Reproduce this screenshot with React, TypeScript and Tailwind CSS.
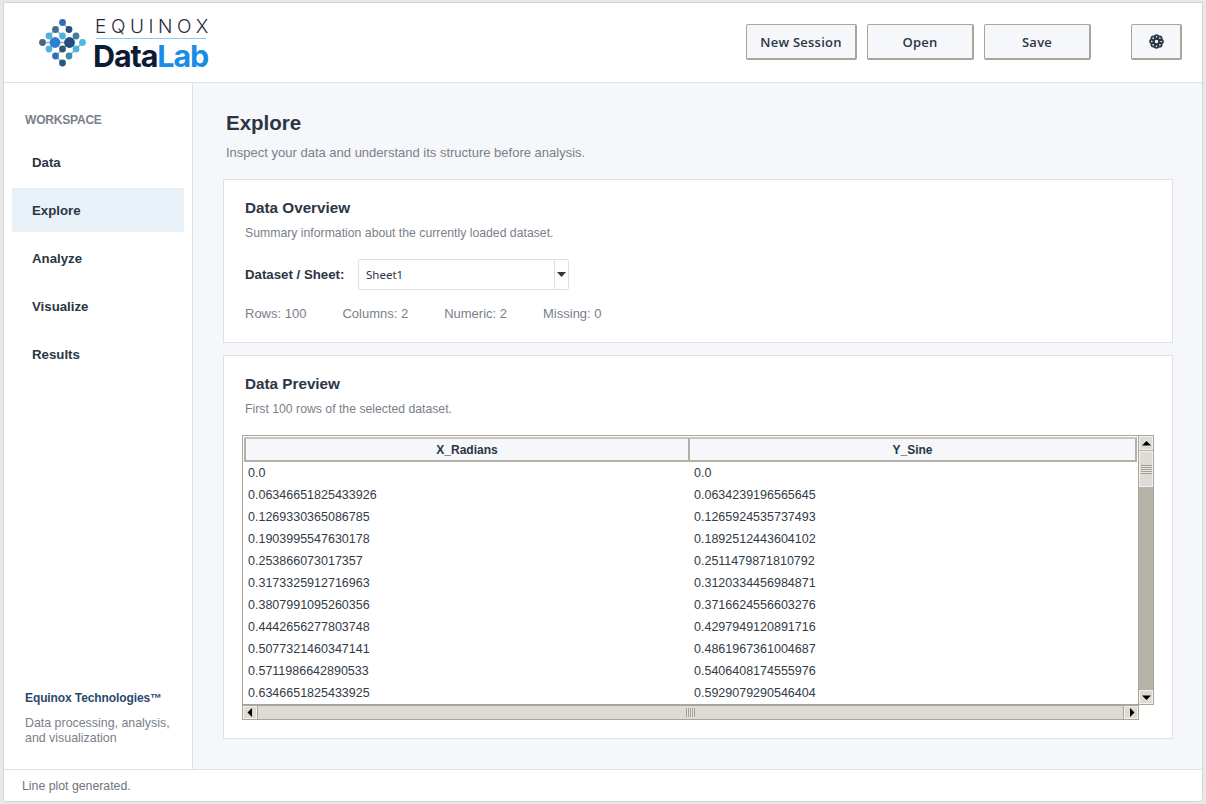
const rows = [
  ["0.0", "0.0"],
  ["0.06346651825433926", "0.0634239196565645"],
  ["0.1269330365086785", "0.1265924535737493"],
  ["0.1903995547630178", "0.1892512443604102"],
  ["0.253866073017357", "0.2511479871810792"],
  ["0.3173325912716963", "0.3120334456984871"],
  ["0.3807991095260356", "0.3716624556603276"],
  ["0.4442656277803748", "0.4297949120891716"],
  ["0.5077321460347141", "0.4861967361004687"],
  ["0.5711986642890533", "0.5406408174555976"],
  ["0.6346651825433925", "0.5929079290546404"],
];

const navItems = ["Data", "Explore", "Analyze", "Visualize", "Results"];

const dots = [
  [24.5, 4.5, 3.4, "#2f6fb5"],
  [17.5, 11.5, 3.4, "#3f6f92"],
  [31, 11.5, 3.4, "#27507f"],
  [11, 18, 3.4, "#4fb2de"],
  [24.5, 18, 3.4, "#4fb2de"],
  [38, 18, 3.4, "#3f7f9f"],
  [4.5, 24.5, 3.4, "#47677f"],
  [17, 24.5, 5.4, "#2f7fd0"],
  [31.5, 24.5, 5.4, "#1f4f80"],
  [44.5, 24.5, 3.4, "#4fb8e0"],
  [11, 31, 3.4, "#4fb2de"],
  [24.5, 31, 3.4, "#33566f"],
  [38, 31, 3.4, "#4fb2de"],
  [17.5, 38, 3.4, "#2f6fb5"],
  [31, 38, 3.4, "#3f8fa8"],
  [24.5, 45, 3.4, "#2c5580"],
] as const;

const Logo = () => (
  <div className="flex items-center">
    <svg width="50" height="50" viewBox="0 0 50 50" className="ml-[34px] blur-[0.4px]">
      <g stroke="#8fb4cc" strokeWidth="1.5">
        <path d="M24.5 4.5L31 11.5M17.5 11.5L11 18M17.5 11.5L24.5 18M38 18L31.5 24.5M4.5 24.5L17 24.5M17 24.5L31.5 24.5M11 31L17 24.5M24.5 31L31.5 24.5M38 31L44.5 24.5M17.5 38L24.5 45M31 38L38 31M17.5 38L24.5 31" />
      </g>
      {dots.map(([cx, cy, r, fill], i) => (
        <circle key={i} cx={cx} cy={cy} r={r} fill={fill} />
      ))}
    </svg>
    <div className="ml-[7px] h-[60px] flex flex-col items-start font-['Inter',sans-serif]">
      <span className="text-[19px] leading-[20px] mt-[4px] tracking-[4.6px] font-light text-[#1f2a3c]">EQUINOX</span>
      <div className="mt-[1px] ml-[1px] w-[110px] h-[1px] bg-[#7fd0f5]" />
      <div className="text-[30.5px] leading-[30px] font-bold tracking-[-1.1px] mt-[2px] ml-[-2px] text-[#0d1b33]">
        Data<span className="text-[#1b8ce6]">Lab</span>
      </div>
    </div>
  </div>
);

const HeaderButton = ({ label, width }: { label: string; width: string }) => (
  <button
    className={`${width} h-[36px] pt-[3px] border border-[#a8a59a] border-b-2 border-r-2 rounded-[2px] bg-[#f5f7fa] text-[13px] font-semibold tracking-[0.25px] text-[#2b3644] font-['Open_Sans',sans-serif] flex items-center justify-center`}
  >
    {label}
  </button>
);

const Triangle = ({ d }: { d: string }) => (
  <svg width="9" height="9" viewBox="0 0 9 9">
    <path d={d} fill="#000" />
  </svg>
);

const ScrollButton = ({ d, className }: { d: string; className: string }) => (
  <div className={`bg-[#dcdbd5] border border-[#f2f1ed] flex items-center justify-center ${className}`}>
    <Triangle d={d} />
  </div>
);

const Card = ({ title, desc, className, children }: { title: string; desc: string; className: string; children: React.ReactNode }) => (
  <section className={`bg-white border border-[#dde1e6] px-[21px] ${className}`}>
    <h2 className="text-[15.25px] leading-[18px] font-bold text-[#2b3644] mt-[19px]">{title}</h2>
    <p className="text-[12.25px] leading-[16px] text-[#7a808a] mt-[8px]">{desc}</p>
    {children}
  </section>
);

export default function App() {
  return (
    <div className="w-[1206px] h-[804px] overflow-hidden bg-[#e8e8e8] pt-[2px] pl-[3px] pr-[3px] pb-[2px] font-['Liberation_Sans',Arial,sans-serif]">
      <div className="h-full flex flex-col bg-white border border-[#d4d6da] rounded-b-[5px] overflow-hidden">
        <header className="h-[80px] shrink-0 flex items-center border-b border-[#dde1e6] bg-white">
          <Logo />
          <div className="ml-auto flex gap-[10px] items-center mt-[-2px]">
            <HeaderButton label="New Session" width="w-[111px]" />
            <HeaderButton label="Open" width="w-[107px]" />
            <HeaderButton label="Save" width="w-[107px]" />
            <button className="ml-[30px] mr-[20px] w-[51px] h-[36px] border border-[#a8a59a] border-b-2 border-r-2 rounded-[2px] bg-[#f5f7fa] flex items-center justify-center">
              <svg width="15" height="15" viewBox="0 0 15 15" fill="none" stroke="#2b3644" strokeWidth="1.8">
                <circle cx="7.5" cy="7.5" r="3" />
                <circle cx="7.5" cy="3" r="1.9" />
                <circle cx="7.5" cy="12" r="1.9" />
                <circle cx="3" cy="7.5" r="1.9" />
                <circle cx="12" cy="7.5" r="1.9" />
                <circle cx="4.3" cy="4.3" r="1.9" />
                <circle cx="10.7" cy="4.3" r="1.9" />
                <circle cx="4.3" cy="10.7" r="1.9" />
                <circle cx="10.7" cy="10.7" r="1.9" />
              </svg>
            </button>
          </div>
        </header>

        <div className="flex-1 flex min-h-0">
          <aside className="w-[189px] shrink-0 border-r border-[#dde1e6] bg-white flex flex-col px-[8px]">
            <div className="text-[12px] leading-[14px] font-bold tracking-[-0.2px] text-[#7a808a] mt-[30px] ml-[13px]">WORKSPACE</div>
            <nav className="flex flex-col gap-[4px] mt-[13px]">
              {navItems.map((item) => (
                <div
                  key={item}
                  className={`h-[44px] pt-[1px] flex items-center pl-[20px] text-[13.25px] font-bold text-[#2b3644] ${item === "Explore" ? "bg-[#e8f0f8]" : ""}`}
                >
                  {item}
                </div>
              ))}
            </nav>
            <div className="mt-auto ml-[13px] mb-[23px]">
              <div className="text-[12px] leading-[14px] font-bold tracking-[-0.1px] text-[#2a4a6e]">Equinox Technologies™</div>
              <div className="text-[12.4px] leading-[15px] text-[#7a808a] mt-[11px]">
                Data processing, analysis,
                <br />
                and visualization
              </div>
            </div>
          </aside>

          <main className="flex-1 min-w-0 bg-[#f5f7fa] pl-[30px] pr-[29px]">
            <h1 className="text-[20.5px] leading-[24px] font-bold text-[#2b3644] mt-[28px] ml-[3px]">Explore</h1>
            <p className="text-[13px] leading-[16px] text-[#7a808a] mt-[10px] ml-[3px]">
              Inspect your data and understand its structure before analysis.
            </p>

            <Card title="Data Overview" desc="Summary information about the currently loaded dataset." className="h-[164px] mt-[18px]">
              <div className="flex items-center mt-[18px]">
                <span className="text-[13.25px] font-bold text-[#2b3644] w-[113px]">Dataset / Sheet:</span>
                <div className="w-[211px] h-[31px] border border-[#dde1e6] rounded-[2px] bg-white flex items-center">
                  <span className="flex-1 pl-[7px] text-[11.5px] text-[#2b3644] font-['Noto_Sans',sans-serif]">Sheet1</span>
                  <div className="w-[14px] h-full border-l border-[#dde1e6] flex items-center justify-center">
                    <svg width="9" height="5" viewBox="0 0 9 5">
                      <path d="M0 0H9L4.5 5Z" fill="#2b3644" />
                    </svg>
                  </div>
                </div>
              </div>
              <div className="flex gap-[36px] mt-[16px] text-[13px] leading-[16px] text-[#7a808a]">
                <span>Rows: 100</span>
                <span>Columns: 2</span>
                <span>Numeric: 2</span>
                <span>Missing: 0</span>
              </div>
            </Card>

            <Card title="Data Preview" desc="First 100 rows of the selected dataset." className="h-[384px] mt-[12px]">
              <div className="flex items-start ml-[-3px] mr-[-4px] mt-[18px]">
                <div className="w-[897px] shrink-0 flex flex-col">
                  <div className="border border-[#a8a59a] h-[270px] flex flex-col bg-white">
                    <div className="flex h-[26px] shrink-0 pt-[1px] pl-[1px] bg-white">
                      <div className="w-[446px] border-2 border-[#b3b0a4] border-t-[#c8c6bc] bg-[#f5f7fa] flex items-center justify-center text-[12px] font-bold text-[#2b3644]">
                        X_Radians
                      </div>
                      <div className="w-[447px] border-2 border-l-0 border-[#b3b0a4] border-t-[#c8c6bc] bg-[#f5f7fa] flex items-center justify-center text-[12px] font-bold text-[#2b3644]">
                        Y_Sine
                      </div>
                    </div>
                    <div className="flex-1 overflow-hidden">
                      {rows.map(([x, y]) => (
                        <div key={x + y} className="h-[22px] flex items-center text-[12.5px] text-[#333b47]">
                          <span className="w-[448px] pl-[5px]">{x}</span>
                          <span className="pl-[3px]">{y}</span>
                        </div>
                      ))}
                    </div>
                  </div>
                  <div className="h-[15px] border-y border-x border-[#a8a59a] flex bg-[#dcdbd5]">
                    <ScrollButton d="M6 0V9L1.5 4.5Z" className="w-[14px]" />
                    <div className="flex-1 border-x border-[#a8a59a] flex items-center justify-center">
                      <div className="w-[9px] h-[9px] bg-[repeating-linear-gradient(90deg,#9f9d92_0,#9f9d92_1px,#e8e7e2_1px,#e8e7e2_2px)]" />
                    </div>
                    <ScrollButton d="M3 0V9L7.5 4.5Z" className="w-[14px]" />
                  </div>
                </div>
                <div className="w-[15px] shrink-0 h-[270px] border border-[#a8a59a] border-l-0 bg-[#b5b2a6] flex flex-col">
                  <ScrollButton d="M0 6.5H9L4.5 2Z" className="h-[14px]" />
                  <div className="h-[36px] mt-[1px] bg-[#dcdbd5] border border-[#f2f1ed] flex items-center justify-center">
                    <div className="w-[11px] h-[9px] bg-[repeating-linear-gradient(0deg,#9f9d92_0,#9f9d92_1px,#e8e7e2_1px,#e8e7e2_2px)]" />
                  </div>
                  <div className="flex-1" />
                  <ScrollButton d="M0 2.5H9L4.5 7Z" className="h-[14px]" />
                </div>
              </div>
            </Card>
          </main>
        </div>

        <footer className="h-[32px] shrink-0 pt-[1px] border-t border-[#dde1e6] bg-white flex items-center pl-[18px] text-[12.3px] text-[#6f7580]">
          Line plot generated.
        </footer>
      </div>
    </div>
  );
}
